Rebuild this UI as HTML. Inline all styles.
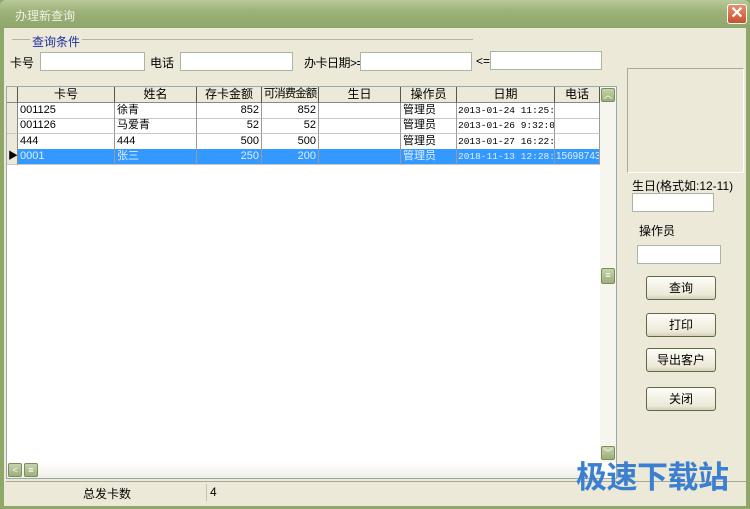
<!DOCTYPE html>
<html><head><meta charset="utf-8"><style>
*{margin:0;padding:0;box-sizing:border-box}
body{width:750px;height:509px;overflow:hidden;background:#8fa86a;font-family:"Liberation Sans","Noto Sans CJK SC",sans-serif;font-size:12px;color:#000;position:relative}
.a{position:absolute}
#title{left:0;top:0;width:750px;height:28px;background:linear-gradient(#b9c99a,#9db27a 40%,#8ea56b);border-radius:6px 6px 0 0}
#title span{position:absolute;left:15px;top:7px;color:#eef2e4;font-size:12px}
#close{left:727px;top:4px;width:20px;height:20px;background:linear-gradient(#e8906e,#c9502e);border:1px solid #fff;border-radius:3px;color:#fff;font-size:16px;line-height:17px;text-align:center;font-weight:bold}
#body{left:4px;top:28px;width:742px;height:478px;background:#ece9d8}
.in{background:#fff;border:1px solid #a9b6a3;height:19px}
.t{font-size:12px;white-space:nowrap}
#grid{left:6px;top:86px;width:611px;height:393px;background:#fff;border:1px solid #9aa;}
.c{position:absolute;height:16px;line-height:15px;border-right:1px solid #9a9a9a;border-bottom:1px solid #c8c8c8;overflow:hidden;white-space:nowrap;padding:0 2px;font-size:11px}
.h{background:#ece9d8;text-align:center;border-right:1px solid #555;border-bottom:1px solid #888;font-size:12px;padding:0}
.r{text-align:right}
.sel{background:#3399ff;color:#dfeeff}
.rh{background:#ece9d8;border-right:1px solid #888}
.btn{width:70px;height:24px;border:1px solid #5d6a43;border-radius:3px;background:linear-gradient(#fdfdf8,#ece9d8 80%,#d6d0bb);text-align:center;line-height:22px;font-size:12px}
.sb{width:14px;height:14px;background:linear-gradient(#c6d3ac,#9cb07a);border:1px solid #7b8d5d;border-radius:2px;color:#fff;font-size:9px;text-align:center;line-height:12px}
</style></head><body>
<div id="title" class="a"><span>办理新查询</span></div>
<div id="close" class="a">✕</div>
<div id="body" class="a"></div>
<div class="a" style="left:12px;top:39px;width:461px;height:1px;background:#b7b3a0"></div>
<div class="a t" style="left:30px;top:33px;color:#1f2fa0;background:#ece9d8;padding:0 2px">查询条件</div>
<div class="a t" style="left:10px;top:54px">卡号</div>
<div class="a in" style="left:40px;top:52px;width:105px"></div>
<div class="a t" style="left:150px;top:54px">电话</div>
<div class="a in" style="left:180px;top:52px;width:113px"></div>
<div class="a t" style="left:304px;top:54px;letter-spacing:-0.5px">办卡日期&gt;=</div>
<div class="a in" style="left:360px;top:52px;width:112px"></div>
<div class="a t" style="left:476px;top:54px">&lt;=</div>
<div class="a in" style="left:490px;top:51px;width:112px"></div>
<div class="a" style="left:627px;top:68px;width:117px;height:105px;border:1px solid #fff;border-top-color:#aca899;border-left-color:#aca899"></div>
<div class="a t" style="left:632px;top:177px">生日(格式如:12-11)</div>
<div class="a in" style="left:632px;top:193px;width:82px"></div>
<div class="a t" style="left:639px;top:222px">操作员</div>
<div class="a in" style="left:637px;top:245px;width:84px"></div>
<div class="a btn" style="left:646px;top:276px">查询</div>
<div class="a btn" style="left:646px;top:313px">打印</div>
<div class="a btn" style="left:646px;top:348px">导出客户</div>
<div class="a btn" style="left:646px;top:387px">关闭</div>
<div id="grid" class="a"></div>
<div id="cells"></div>
<div class="a" style="left:600px;top:87px;width:16px;height:375px;background:#f6f5ee"></div>
<div class="a sb" style="left:601px;top:88px">︿</div>
<div class="a sb" style="left:601px;top:268px;height:16px">≡</div>
<div class="a sb" style="left:601px;top:446px">﹀</div>
<div class="a" style="left:7px;top:462px;width:593px;height:16px;background:linear-gradient(#fff,#f0efe6)"></div>
<div class="a sb" style="left:8px;top:463px">&lt;</div>
<div class="a sb" style="left:24px;top:463px">≡</div>
<div class="a" style="left:6px;top:481px;width:740px;height:1px;background:#aca899"></div>
<div class="a t" style="left:83px;top:485px">总发卡数</div>
<div class="a" style="left:206px;top:484px;width:1px;height:17px;background:#c8c4b0"></div>
<div class="a t" style="left:210px;top:485px">4</div>
<div class="a" style="left:576px;top:458px;font-size:31px;font-weight:bold;color:#3b7fd0;letter-spacing:-0.5px;line-height:34px;font-family:'Noto Sans CJK SC',sans-serif">极速下载站</div>
<script>
var cols=[[7,11],[18,97],[115,82],[197,65],[262,57],[319,82],[401,56],[457,98],[555,45]];
var head=['','卡号','姓名','存卡金额','可消费金额','生日','操作员','日期','电话'];
var rows=[['','001125','徐青','852','852','','管理员','2013-01-24 11:25:',''],['','001126','马爱青','52','52','','管理员','2013-01-26 9:32:0',''],['','444','444','500','500','','管理员','2013-01-27 16:22:',''],['▶','0001','张三','250','200','','管理员','2018-11-13 12:28:','15698743']];
var ys=[87,103,118,134,149];var h='';
for(var i=0;i<9;i++){var s=i==4?'letter-spacing:-1px;font-size:11.5px':'';h+='<div class="c h" style="left:'+cols[i][0]+'px;top:87px;width:'+cols[i][1]+'px;'+s+'">'+head[i]+'</div>';}
for(var r=0;r<4;r++)for(var i=0;i<9;i++){var cl='c';if(i==0)cl+=' rh';else if(r==3)cl+=' sel';if(i==3||i==4)cl+=' r';
var st='';if(i==7)st='font-family:Liberation Mono,monospace;font-size:9.5px;padding:0 1px;';if(i==8)st='font-size:10px;padding:0 1px;';if(i==0)st='font-size:10px;padding:0 1px';
h+='<div class="'+cl+'" style="left:'+cols[i][0]+'px;top:'+ys[r+1]+'px;width:'+cols[i][1]+'px;'+st+'">'+rows[r][i]+'</div>';}
document.getElementById('cells').innerHTML=h;
</script>
</body></html>
